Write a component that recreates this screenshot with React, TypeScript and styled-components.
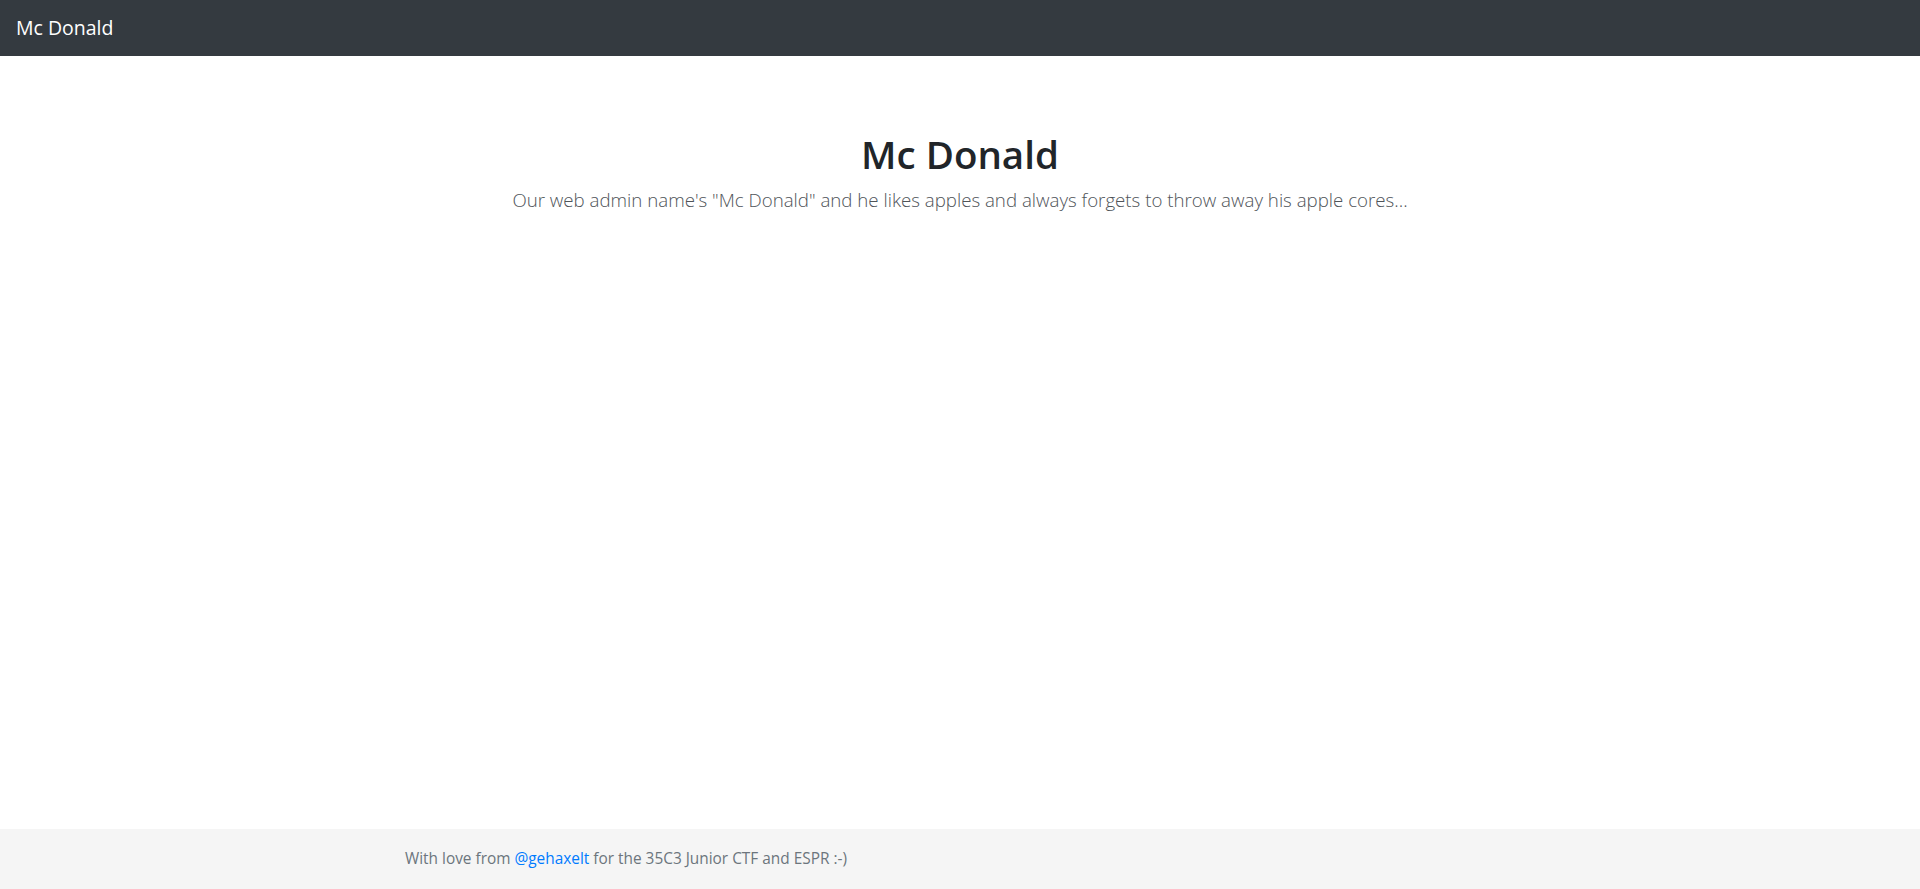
import React from "react";
import styled, { createGlobalStyle } from "styled-components";

const Global = createGlobalStyle`
  html, body { margin: 0; padding: 0; height: 100%; }
  body {
    font-family: "Open Sans", "Noto Sans", "Liberation Sans", sans-serif;
    font-size: 16px;
    line-height: 1.5;
    color: #212529;
    background: #fff;
  }
  #root { min-height: 100%; display: flex; flex-direction: column; }
`;

const Page = styled.div`
  min-height: 100vh;
  display: flex;
  flex-direction: column;
`;

const Navbar = styled.nav`
  background: #343a40;
  padding: 8px 16px;
  display: flex;
  align-items: center;
`;

const Brand = styled.a`
  color: #fff;
  font-size: 19.5px;
  line-height: 30px;
  padding: 5px 0;
  text-decoration: none;
`;

const Main = styled.main`
  flex: 1;
  display: flex;
  flex-direction: column;
  align-items: center;
  padding-top: 75px;
  text-align: center;
`;

const Title = styled.h1`
  margin: 0 0 9px;
  font-size: 38.5px;
  font-weight: 600;
  line-height: 1.2;
  color: #212529;
`;

const Lead = styled.p`
  margin: 0;
  font-size: 18.7px;
  font-weight: 300;
  color: #4f5459;
`;

const Footer = styled.footer`
  height: 60px;
  background: #f5f5f5;
  display: flex;
  justify-content: center;
`;

const Container = styled.div`
  width: 1140px;
  padding: 0 15px;
  box-sizing: border-box;
  line-height: 60px;
  font-size: 15.4px;
  color: #6c757d;
`;

const Link = styled.a`
  color: #007bff;
  text-decoration: none;
`;

export default function App() {
  return (
    <Page>
      <Global />
      <Navbar>
        <Brand href="#">Mc Donald</Brand>
      </Navbar>
      <Main>
        <Title>Mc Donald</Title>
        <Lead>
          Our web admin name's "Mc Donald" and he likes apples and always forgets to throw away his apple cores...
        </Lead>
      </Main>
      <Footer>
        <Container>
          With love from <Link href="#">@gehaxelt</Link> for the 35C3 Junior CTF and ESPR :-)
        </Container>
      </Footer>
    </Page>
  );
}
